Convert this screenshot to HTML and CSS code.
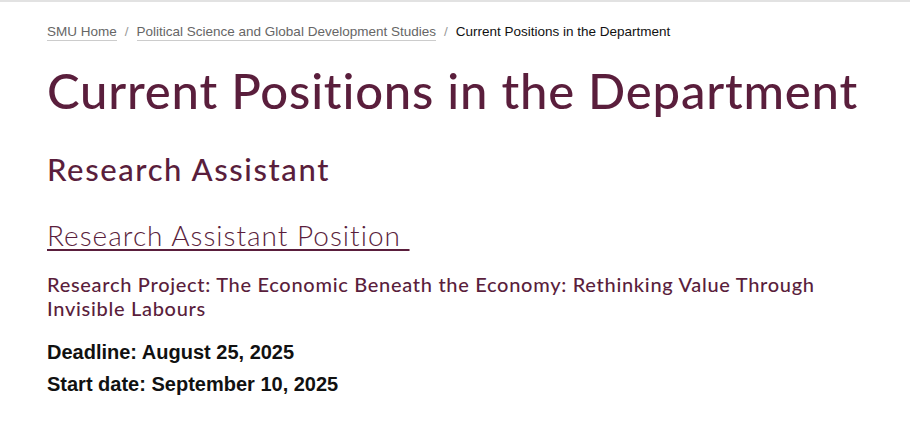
FILE: index.html
```html
<!DOCTYPE html>
<html lang="en">
<head>
    <meta charset="UTF-8">
    <meta name="viewport" content="width=device-width, initial-scale=1.0">
    <title>Current Positions in the Department</title>
    <link rel="stylesheet" href="styles.css">
</head>
<body>
    <div class="topline"></div>
    <main class="page">
        <nav class="breadcrumb">
            <a href="#">SMU Home</a>
            <span class="sep">/</span>
            <a href="#">Political Science and Global Development Studies</a>
            <span class="sep">/</span>
            <span class="current">Current Positions in the Department</span>
        </nav>

        <h1>Current Positions in the Department</h1>

        <h2>Research Assistant</h2>

        <h3><a href="#">Research Assistant Position&nbsp;</a></h3>

        <h4>Research Project: The Economic Beneath the Economy: Rethinking Value Through Invisible Labours</h4>

        <p class="meta">Deadline: August 25, 2025</p>
        <p class="meta">Start date: September 10, 2025</p>
    </main>
</body>
</html>
```

FILE: styles.css
```css
body {
    margin: 0;
    background-color: #fff;
    font-family: "Liberation Sans", Arial, sans-serif;
}
.topline {
    height: 2px;
    background-color: #e2e2e2;
}
.page {
    padding: 0 47px;
}
.breadcrumb {
    display: flex;
    align-items: baseline;
    gap: 8px;
    padding-top: 22px;
    font-size: 13.5px;
    color: #111;
}
.breadcrumb a {
    color: #666;
    text-decoration: none;
    border-bottom: 1px solid #ccc;
    padding-bottom: 1px;
}
.breadcrumb .sep {
    color: #999;
}
h1, h2, h3, h4 {
    font-family: Lato, "Open Sans", sans-serif;
    color: #5a1e3c;
    margin: 0;
}
h1 {
    font-size: 49px;
    font-weight: 500;
    line-height: 60px;
    letter-spacing: 0.8px;
    margin-top: 19px;
}
h2 {
    font-size: 31px;
    font-weight: 500;
    line-height: 40px;
    letter-spacing: 1.6px;
    margin-top: 29px;
}
h3 {
    font-size: 28px;
    font-weight: 300;
    line-height: 36px;
    letter-spacing: 1px;
    margin-top: 28px;
}
h3 a {
    color: #5a1e3c;
    text-decoration: underline;
    text-decoration-thickness: 2px;
    text-underline-offset: 3px;
}
h4 {
    font-size: 20px;
    font-weight: 500;
    line-height: 24px;
    letter-spacing: 0.7px;
    margin-top: 19px;
    max-width: 800px;
}
.meta {
    font-size: 20px;
    font-weight: bold;
    color: #111;
    margin: 21px 0 0;
    line-height: 23px;
}
.meta + .meta {
    margin-top: 9px;
}
```
